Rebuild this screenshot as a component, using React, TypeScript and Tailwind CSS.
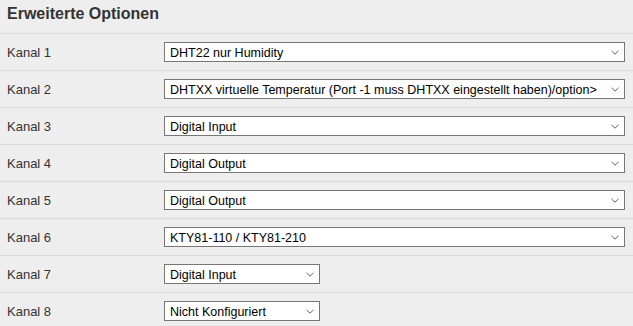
import React from "react";

const rows: { label: string; value: string; short?: boolean }[] = [
  { label: "Kanal 1", value: "DHT22 nur Humidity" },
  { label: "Kanal 2", value: "DHTXX virtuelle Temperatur (Port -1 muss DHTXX eingestellt haben)/option>" },
  { label: "Kanal 3", value: "Digital Input" },
  { label: "Kanal 4", value: "Digital Output" },
  { label: "Kanal 5", value: "Digital Output" },
  { label: "Kanal 6", value: "KTY81-110 / KTY81-210" },
  { label: "Kanal 7", value: "Digital Input", short: true },
  { label: "Kanal 8", value: "Nicht Konfiguriert", short: true },
];

function Chevron() {
  return (
    <svg width="8" height="5" viewBox="0 0 8 5" className="shrink-0 block">
      <path d="M0.5 0.8 L4 4.2 L7.5 0.8" fill="none" stroke="#606060" strokeWidth="1" />
    </svg>
  );
}

export default function App() {
  return (
    <div
      className="w-[633px] h-[326px] overflow-hidden bg-[#eeeeee] text-[#333333]"
      style={{ fontFamily: '"Liberation Sans", Arial, sans-serif' }}
    >
      <div className="h-[33px] pl-[7px] pt-[5px]">
        <h2 className="text-[16px] leading-[18px] font-bold text-[#333333]">Erweiterte Optionen</h2>
      </div>
      {rows.map((r) => (
        <div key={r.label} className="flex items-center border-t border-[#dadada] pl-[7px] pr-[8px] py-2">
          <div className="w-[157px] shrink-0 text-[13px] leading-[15px] text-[#333333]">{r.label}</div>
          <div
            className={
              (r.short ? "w-[156px] " : "flex-1 ") +
              "h-5 flex items-center bg-white border border-[#767676] pl-[5px] pr-[5px] text-[12.5px] leading-[16px] text-black"
            }
          >
            <span className="flex-1 whitespace-nowrap overflow-hidden pt-[1px]">{r.value}</span>
            <span className="pl-[4px]">
              <Chevron />
            </span>
          </div>
        </div>
      ))}
    </div>
  );
}
